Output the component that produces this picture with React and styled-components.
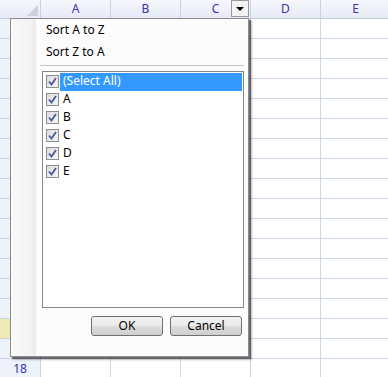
import React from "react";
import styled, { createGlobalStyle } from "styled-components";

const GlobalStyle = createGlobalStyle`
  html, body {
    margin: 0;
    padding: 0;
    background: #ffffff;
  }
  body {
    font-family: "Noto Sans", "Open Sans", "Liberation Sans", sans-serif;
    font-size: 12px;
    overflow: hidden;
  }
`;

const COLUMNS = ["A", "B", "C", "D", "E"];
const ROWS = Array.from({ length: 18 }, (_, i) => i + 1);
const ITEMS = ["(Select All)", "A", "B", "C", "D", "E"];

const Page = styled.div`
  position: relative;
  width: 388px;
  height: 377px;
  overflow: hidden;
`;

const Sheet = styled.div`
  display: grid;
  grid-template-columns: 41px repeat(5, 70px);
  grid-template-rows: 19px;
  grid-auto-rows: 20px;
`;

const Corner = styled.div`
  position: relative;
  box-sizing: border-box;
  border-right: 1px solid #c9d3e4;
  border-bottom: 1px solid #c2cde0;
  background: linear-gradient(#f7f8fd, #e6eaf6);

  &::after {
    content: "";
    position: absolute;
    right: 2px;
    bottom: 2px;
    width: 0;
    height: 0;
    border-left: 11px solid transparent;
    border-bottom: 11px solid #cdd1dc;
  }
`;

const ColHeader = styled.div`
  position: relative;
  box-sizing: border-box;
  border-right: 1px solid #c9d3e4;
  border-bottom: 1px solid #c2cde0;
  background: linear-gradient(#f7f8fd, #e6eaf6);
  color: #3b2fb4;
  display: flex;
  align-items: center;
  justify-content: center;
  font-size: 12px;
  line-height: 1;
`;

const FilterButton = styled.div`
  position: absolute;
  top: 0;
  right: 1px;
  width: 18px;
  height: 17px;
  box-sizing: border-box;
  border: 1px solid #9a9a9a;
  background: #f3f3f3;
  display: flex;
  align-items: center;
  justify-content: center;

  &::before {
    content: "";
    width: 0;
    height: 0;
    border-left: 4px solid transparent;
    border-right: 4px solid transparent;
    border-top: 4px solid #000;
  }
`;

const RowHeader = styled.div`
  box-sizing: border-box;
  border-right: 1px solid #c9d3e4;
  border-bottom: 1px solid #c9d3e4;
  background: ${(p) => (p.$active ? "#f1e9b3" : "#eef3fb")};
  color: #3b2fb4;
  display: flex;
  align-items: center;
  justify-content: center;
  font-size: 12px;
`;

const Cell = styled.div`
  box-sizing: border-box;
  border-right: 1px solid #ccd7e8;
  border-bottom: 1px solid #ccd7e8;
  background: #ffffff;
`;

const Menu = styled.div`
  position: absolute;
  top: 18px;
  left: 10px;
  width: 239px;
  height: 339px;
  box-sizing: border-box;
  border: 1px solid #8c8c8c;
  background: #fcfcfc;
  box-shadow: 2px 2px 1px rgba(0, 0, 0, 0.45), 3px 3px 2px rgba(0, 0, 0, 0.2);
  display: flex;
  color: #000;
`;

const IconStrip = styled.div`
  width: 25px;
  flex: none;
  background: linear-gradient(to right, #f9f9f9, #f3f3f3 75%, #ebebeb);
`;

const Body = styled.div`
  flex: 1;
  display: flex;
  flex-direction: column;
  padding: 0 4px 20px 6px;
`;

const MenuItem = styled.div`
  height: 22px;
  display: flex;
  align-items: center;
  padding-left: 4px;
  font-size: 12px;
`;

const Separator = styled.div`
  margin: 2px 0 3px -2px;
  height: 1px;
  border-top: 1px solid #c4c4c4;
  border-bottom: 1px solid #ffffff;
`;

const ListBox = styled.div`
  height: 238px;
  box-sizing: border-box;
  border: 1px solid #828790;
  background: #ffffff;
  padding-top: 1px;
`;

const ListItem = styled.div`
  height: 18px;
  display: flex;
  align-items: center;
  padding-left: 3px;
`;

const Label = styled.span`
  flex: 1;
  height: 18px;
  margin: 0 1px 0 1px;
  padding-left: 3px;
  display: flex;
  align-items: center;
  font-size: 12px;
  line-height: 1;
  padding-bottom: 1px;
  box-sizing: border-box;
  background: ${(p) => (p.$selected ? "#3399ff" : "transparent")};
  color: ${(p) => (p.$selected ? "#ffffff" : "#000")};
`;

const Box = styled.span`
  width: 13px;
  height: 13px;
  box-sizing: border-box;
  border: 1px solid #8e8f8f;
  background: linear-gradient(135deg, #dcdcdc, #f6f6f6);
  display: flex;
  align-items: center;
  justify-content: center;
  flex: none;
`;

const Buttons = styled.div`
  display: flex;
  justify-content: flex-end;
  gap: 7px;
  margin-top: 8px;
  padding-right: 2px;
`;

const Button = styled.button`
  width: 72px;
  height: 20px;
  box-sizing: border-box;
  border: 1px solid #707070;
  border-radius: 3px;
  background: linear-gradient(#f2f2f2 0%, #ebebeb 50%, #dddddd 51%, #cfcfcf 100%);
  font-family: "Noto Sans", "Open Sans", "Liberation Sans", sans-serif;
  font-size: 12px;
  color: #000;
  padding: 0;
  line-height: 1;
`;

const Check = () => (
  <svg width="9" height="9" viewBox="0 0 9 9">
    <path d="M1 4.5 L3.5 7.5 L8 1" fill="none" stroke="#4a5a9e" strokeWidth="1.8" />
  </svg>
);

export default function App() {
  return (
    <Page>
      <GlobalStyle />
      <Sheet>
        <Corner />
        {COLUMNS.map((c) => (
          <ColHeader key={c}>
            {c}
            {c === "C" && <FilterButton />}
          </ColHeader>
        ))}
        {ROWS.map((r) => (
          <React.Fragment key={r}>
            <RowHeader $active={r === 16}>{r}</RowHeader>
            {COLUMNS.map((c) => (
              <Cell key={c} />
            ))}
          </React.Fragment>
        ))}
      </Sheet>

      <Menu>
        <IconStrip />
        <Body>
          <MenuItem>Sort A to Z</MenuItem>
          <MenuItem>Sort Z to A</MenuItem>
          <Separator />
          <ListBox>
            {ITEMS.map((item, i) => (
              <ListItem key={item}>
                <Box>
                  <Check />
                </Box>
                <Label $selected={i === 0}>{item}</Label>
              </ListItem>
            ))}
          </ListBox>
          <Buttons>
            <Button>OK</Button>
            <Button>Cancel</Button>
          </Buttons>
        </Body>
      </Menu>
    </Page>
  );
}
